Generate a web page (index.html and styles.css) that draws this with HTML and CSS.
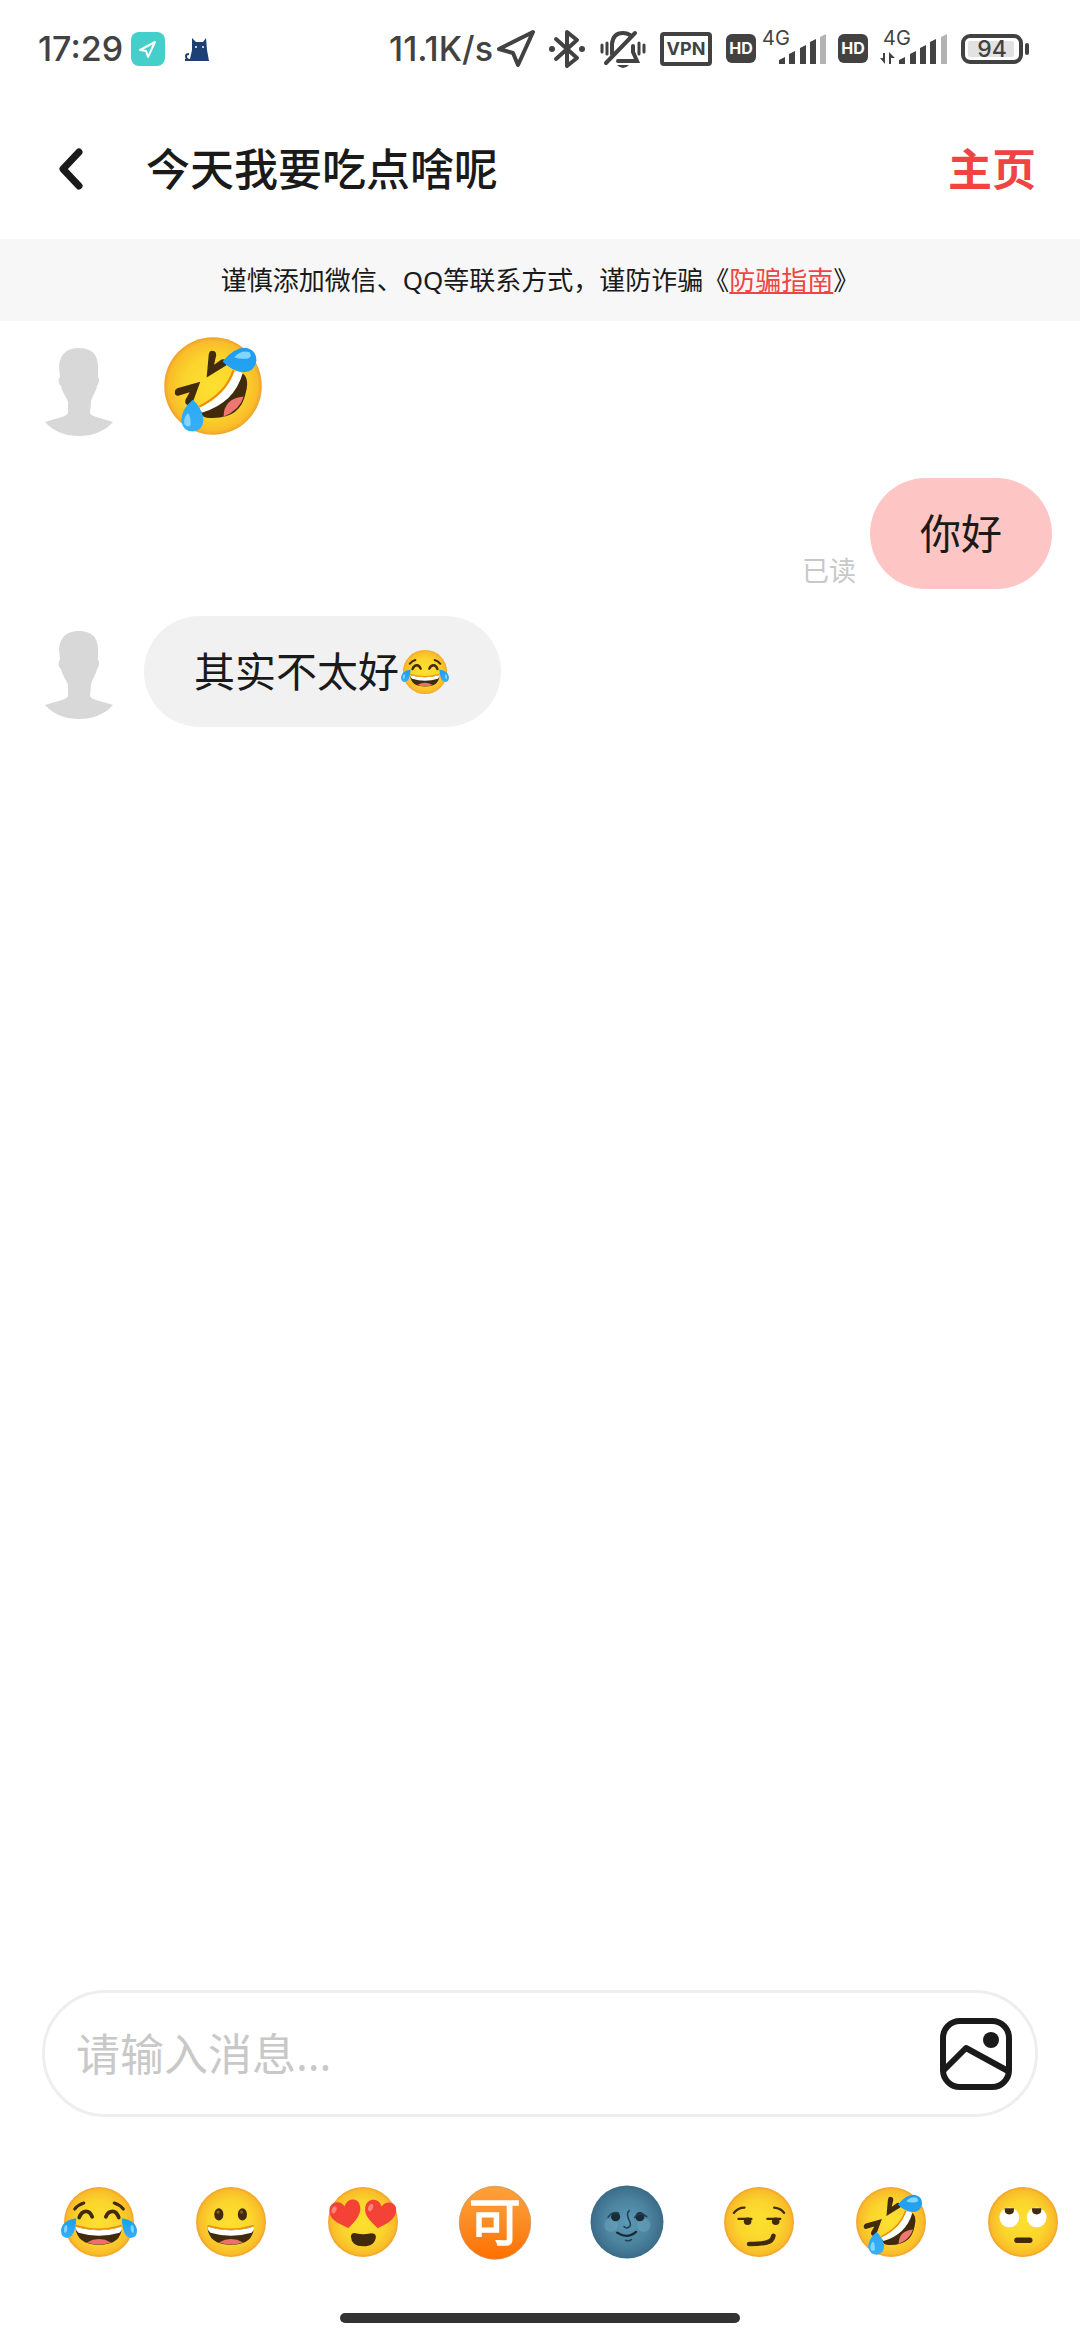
FILE: index.html
```html
<!DOCTYPE html>
<html lang="zh-CN">
<head>
    <meta charset="UTF-8">
    <meta name="viewport" content="width=device-width, initial-scale=1.0">
    <title>今天我要吃点啥呢</title>
    <link rel="stylesheet" href="styles.css">
</head>
<body>
    <!-- Shared emoji and avatar shapes -->
    <svg class="sprites" width="0" height="0" aria-hidden="true">
        <defs>
            <radialGradient id="face" cx="0.5" cy="0.5" r="0.5">
                <stop offset="0" stop-color="#fde030"/>
                <stop offset="0.6" stop-color="#fbd52d"/>
                <stop offset="0.92" stop-color="#f9bc29"/>
                <stop offset="1" stop-color="#f0a02a"/>
            </radialGradient>
            <linearGradient id="orange" x1="0" y1="0" x2="0" y2="1">
                <stop offset="0" stop-color="#ffa13a"/>
                <stop offset="0.5" stop-color="#fb8c25"/>
                <stop offset="1" stop-color="#ff6f00"/>
            </linearGradient>
            <radialGradient id="night" cx="0.5" cy="0.5" r="0.5">
                <stop offset="0" stop-color="#5c9ab8"/>
                <stop offset="0.6" stop-color="#4d849f"/>
                <stop offset="1" stop-color="#3b6c88"/>
            </radialGradient>
            <linearGradient id="tear" x1="0" y1="0" x2="0" y2="1">
                <stop offset="0" stop-color="#1e9df0"/>
                <stop offset="1" stop-color="#35aff8"/>
            </linearGradient>
            <g id="grin">
                <path d="M19 56 Q50 66 80 56 Q80 80 50 80 Q20 80 19 56Z" fill="#422b0d"/>
                <path d="M19 56 Q50 66 80 56 Q81 61 77 64 Q50 72 23 64 Q19 61 19 56Z" fill="#fff"/>
                <path d="M34 77 Q50 68 66 77 Q50 82 34 77Z" fill="#f06f6a"/>
                <path d="M20 55 Q50 64 79 55" fill="none" stroke="#eb8f00" stroke-width="2" stroke-linecap="round"/>
            </g>
            <path id="heart" d="M21 36 C12 30 0 23 0 12 C0 4 5 0 11 0 C16 0 19 3 21 7 C23 3 27 0 32 0 C37 0 41 4 41 11 C41 22 30 30 21 36Z"/>

            <symbol id="joy" viewBox="0 0 100 100">
                <circle cx="50" cy="50" r="46" fill="url(#face)"/>
                <g fill="none" stroke="#422b0d" stroke-linecap="round">
                    <path d="M18 33 Q23 27 30 25 M82 33 Q77 27 70 25" stroke-width="4"/>
                    <path d="M24 44 Q27 36 33 36 Q38 36 41 43 M59 43 Q62 36 68 36 Q73 36 76 44" stroke-width="5"/>
                </g>
                <use href="#grin"/>
                <path d="M20 45 Q1 48 0 61 Q0 71 8 71 Q19 70 20 45Z M80 45 Q99 48 100 61 Q100 71 92 71 Q81 70 80 45Z" fill="url(#tear)"/>
                <path d="M4 60 Q4 55 7 54 Q9 55 8 62 Q4 68 4 60Z M96 60 Q96 55 93 54 Q91 55 92 62 Q96 68 96 60Z" fill="#81d4fa"/>
            </symbol>

            <symbol id="grinning" viewBox="0 0 100 100">
                <circle cx="50" cy="50" r="46" fill="url(#face)"/>
                <ellipse cx="34" cy="40" rx="6" ry="8" fill="#422b0d"/>
                <ellipse cx="65" cy="40" rx="6" ry="8" fill="#422b0d"/>
                <circle cx="33" cy="37" r="2" fill="#896024"/>
                <circle cx="64" cy="37" r="2" fill="#896024"/>
                <use href="#grin"/>
            </symbol>

            <symbol id="heart-eyes" viewBox="0 0 100 100">
                <circle cx="50" cy="50" r="46" fill="url(#face)"/>
                <use href="#heart" transform="translate(4 26) rotate(-10)" fill="#f44336"/>
                <use href="#heart" transform="translate(55 19) rotate(10)" fill="#f44336"/>
                <ellipse cx="12" cy="34" rx="3" ry="5" transform="rotate(20 12 34)" fill="#ff847a"/>
                <ellipse cx="60" cy="31" rx="3" ry="5" transform="rotate(25 60 31)" fill="#ff847a"/>
                <path d="M34 69 Q35 63 42 65 Q50 67 59 65 Q66 64 67 69 Q66 82 50 82 Q35 82 34 69Z" fill="#422b0d"/>
            </symbol>

            <symbol id="acceptable" viewBox="0 0 100 100">
                <ellipse cx="50" cy="51" rx="47" ry="48" fill="url(#orange)" stroke="#c8925a" stroke-width="1"/>
                <text class="acceptable-text" x="50" y="75" text-anchor="middle">可</text>
            </symbol>

            <symbol id="new-moon" viewBox="0 0 100 100">
                <circle cx="50" cy="50" r="48" fill="url(#night)"/>
                <circle cx="29" cy="54" r="9" fill="#6ba5c0" opacity="0.5"/>
                <circle cx="72" cy="54" r="9" fill="#6ba5c0" opacity="0.5"/>
                <circle cx="35" cy="43" r="6" fill="#1b2b38"/>
                <circle cx="67" cy="43" r="6" fill="#1b2b38"/>
                <g fill="none" stroke="#1f4156" stroke-linecap="round" stroke-width="2">
                    <path d="M25 44 Q30 36 39 38 M60 44 Q67 35 76 43"/>
                    <path d="M53 35 Q49 38 52 46 Q57 55 52 57 Q49 59 46 56"/>
                    <path d="M37 64 Q50 73 62 63" stroke="#182b38" stroke-width="3"/>
                    <path d="M48 74 Q53 76 56 73"/>
                </g>
            </symbol>

            <symbol id="smirk" viewBox="0 0 100 100">
                <circle cx="50" cy="50" r="46" fill="url(#face)"/>
                <circle cx="35" cy="49" r="5" fill="#422b0d"/>
                <circle cx="72" cy="49" r="5" fill="#422b0d"/>
                <g fill="none" stroke="#422b0d" stroke-linecap="round" stroke-linejoin="round">
                    <path d="M17 38 Q22 31 31 31 M70 31 Q79 32 83 38" stroke-width="3"/>
                    <path d="M23 46 Q30 46 40 46 M61 46 Q68 46 78 46" stroke-width="3"/>
                    <path d="M37 79 Q52 79 60 77 Q68 75 69 68" stroke-width="6"/>
                </g>
            </symbol>

            <symbol id="rofl" viewBox="0 0 100 100">
                <circle cx="50" cy="50" r="46" fill="url(#face)"/>
                <path d="M76 37 Q85 41 81 56 Q76 83 44 80 Q38 78 38 73 Q66 63 76 37Z" fill="#422b0d"/>
                <path d="M70 37 Q75 35 78 38 Q70 66 40 75 Q37 73 38 70 Q62 58 70 37Z" fill="#fff"/>
                <path d="M60 79 Q60 62 79 60 Q75 73 60 79Z" fill="#ef7772"/>
                <path d="M69 36 Q62 57 38 69" fill="none" stroke="#eb8f00" stroke-width="2" stroke-linecap="round"/>
                <path d="M46 20 Q47 16 50 17 Q53 17 53 21 L51 30 L58 25 Q62 24 63 27 Q64 29 62 31 L44 42Z" fill="#422b0d"/>
                <path d="M18 59 Q14 60 14 56 Q14 53 17 52 L38 46 L31 65 Q29 69 26 68 Q23 67 24 63 L28 56Z" fill="#422b0d"/>
                <path d="M59 27 Q69 14 81 14 Q91 16 91 26 Q89 37 79 37 Q69 37 59 27Z M31 63 Q20 72 20 83 Q22 93 31 93 Q41 92 41 81 Q39 70 31 63Z" fill="url(#tear)"/>
                <path d="M70 23 Q76 16 84 18 Q88 22 83 24 Q76 25 70 23Z M26 76 Q29 76 29 87 Q26 90 23 86 Q22 80 26 76Z" fill="#81d4fa"/>
            </symbol>

            <symbol id="rolling-eyes" viewBox="0 0 100 100">
                <circle cx="50" cy="50" r="46" fill="url(#face)"/>
                <circle cx="32" cy="44" r="13" fill="#fff"/>
                <circle cx="68" cy="44" r="13" fill="#fff"/>
                <path d="M26 32 H38 Q39 40 32 40 Q25 40 26 32Z M62 32 H74 Q75 40 68 40 Q61 40 62 32Z" fill="#422b0d"/>
                <path d="M42 74 H59" stroke="#422b0d" stroke-width="7" stroke-linecap="round"/>
            </symbol>

            <symbol id="avatar" viewBox="0 0 68 88">
                <path d="M34 0 C46 0 53 6 53 18 L53 29 C55 30 54 36 52 38 C51 44 47 48 46 54 L45 65 C46 69 57 70 68 74 C59 84 47 88 34 88 C21 88 9 84 0 74 C11 70 22 69 23 65 L23 54 C21 48 17 44 16 38 C13 36 13 30 15 29 L14 18 C15 6 22 0 34 0Z" fill="#d8d8d8"/>
            </symbol>
        </defs>
    </svg>

    <!-- Status bar -->
    <div class="status-bar">
        <div class="status-left">
            <span class="status-text">17:29</span>
            <svg width="34" height="34" viewBox="0 0 34 34">
                <rect width="34" height="34" rx="8" fill="#45cfcb"/>
                <path d="M24 10 L9 18 L15 19 L17 25Z" fill="none" stroke="#fff" stroke-width="2" stroke-linejoin="round"/>
            </svg>
            <svg class="cat" width="24" height="23" viewBox="0 0 24 23">
                <path d="M7 0 L11 4 H18 L21 0 L22 12 L24 23 H0 V21 H5 L7 12Z" fill="#1d3f73"/>
                <path d="M5 22 Q1 22 1 18 Q1 16 4 16" fill="none" stroke="#1d3f73" stroke-width="2"/>
                <circle cx="11" cy="9" r="1" fill="#fff"/>
                <circle cx="18" cy="9" r="1" fill="#fff"/>
            </svg>
        </div>
        <div class="status-right">
            <div class="network">
                <span class="status-text">11.1K/s</span>
                <svg width="40" height="40" viewBox="0 0 40 40">
                    <path d="M37 3 L3 20 L17 24 L22 36Z" fill="none" stroke="#424242" stroke-width="4" stroke-linejoin="round"/>
                </svg>
            </div>
            <svg width="38" height="40" viewBox="0 0 38 40">
                <path d="M8 10 L29 29 L19 37 V3 L29 11 L8 30" fill="none" stroke="#424242" stroke-width="4" stroke-linejoin="round" stroke-linecap="round"/>
                <circle cx="4" cy="20" r="3" fill="#424242"/>
                <circle cx="34" cy="20" r="3" fill="#424242"/>
            </svg>
            <svg width="50" height="40" viewBox="0 0 50 40">
                <g fill="none" stroke="#424242" stroke-width="4" stroke-linecap="round">
                    <path d="M14 25 V15 Q15 4 25 4 Q29 4 32 6"/>
                    <path d="M8 34 L37 4"/>
                    <path d="M35 17 V23 L39 32 H20"/>
                </g>
                <path d="M4 16 V23 M9 14 V25 M41 14 V25 M46 16 V23" fill="none" stroke="#424242" stroke-width="3" stroke-linecap="round"/>
                <path d="M19 36 H31 Q25 42 19 36Z" fill="#424242"/>
            </svg>
            <svg width="54" height="40" viewBox="0 0 54 40">
                <rect x="2" y="5" width="48" height="30" rx="2" fill="none" stroke="#424242" stroke-width="4"/>
                <text class="badge-text" x="26" y="26" text-anchor="middle" fill="#424242">VPN</text>
            </svg>
            <svg width="100" height="48" viewBox="0 -4 100 48">
                <rect x="0" y="5" width="30" height="29" rx="6" fill="#424242"/>
                <text class="badge-text hd" x="15" y="25" text-anchor="middle" fill="#fff">HD</text>
                <text class="net-text" x="36" y="16" fill="#424242">4G</text>
                <path d="M53 35 V31 L59 28 V35Z M63 35 V25 L69 22 V35Z M74 35 V19 L80 16 V35Z M84 35 V13 L90 10 V35Z" fill="#424242"/>
                <path d="M94 35 V8 L100 5 V35Z" fill="#b3b3b3"/>
            </svg>
            <svg width="110" height="48" viewBox="0 -4 110 48">
                <rect x="0" y="5" width="30" height="29" rx="6" fill="#424242"/>
                <text class="badge-text hd" x="15" y="25" text-anchor="middle" fill="#fff">HD</text>
                <text class="net-text" x="45" y="16" fill="#424242">4G</text>
                <path d="M47 24 V35 L42 29 H45 V24Z M51 35 V23 L57 29 H53 V35Z" fill="#424242"/>
                <path d="M61 35 V31 L67 28 V35Z M72 35 V25 L78 22 V35Z M82 35 V19 L88 16 V35Z M92 35 V13 L98 10 V35Z" fill="#424242"/>
                <path d="M103 35 V8 L109 5 V35Z" fill="#b3b3b3"/>
            </svg>
            <svg width="70" height="40" viewBox="0 0 70 40">
                <rect x="3" y="7" width="58" height="26" rx="7" fill="none" stroke="#424242" stroke-width="4"/>
                <rect x="8" y="12" width="46" height="16" rx="2" fill="#e2e2e2"/>
                <path d="M67 16 V24" stroke="#424242" stroke-width="4" stroke-linecap="round"/>
                <text class="battery-text" x="32" y="28" text-anchor="middle" fill="#424242">94</text>
            </svg>
        </div>
    </div>

    <!-- Chat header -->
    <header class="header">
        <button class="back" type="button" aria-label="返回">
            <svg width="30" height="44" viewBox="0 0 30 44">
                <path d="M23 5 L7 22 L23 39" fill="none" stroke="#1a1a1a" stroke-width="7" stroke-linecap="round" stroke-linejoin="round"/>
            </svg>
        </button>
        <h1 class="title">今天我要吃点啥呢</h1>
        <a class="home-link" href="#">主页</a>
    </header>

    <p class="notice">谨慎添加微信、QQ等联系方式，谨防诈骗《<a href="#">防骗指南</a>》</p>

    <!-- Messages -->
    <main class="chat">
        <div class="message">
            <svg class="avatar"><use href="#avatar"/></svg>
            <div class="sticker">
                <svg class="emoji-big" role="img" aria-label="笑得打滚"><use href="#rofl"/></svg>
            </div>
        </div>
        <div class="message mine">
            <span class="read">已读</span>
            <div class="bubble">你好</div>
        </div>
        <div class="message">
            <svg class="avatar"><use href="#avatar"/></svg>
            <div class="bubble">其实不太好<svg class="emoji-inline" role="img" aria-label="笑哭"><use href="#joy"/></svg></div>
        </div>
    </main>

    <!-- Composer -->
    <form class="composer">
        <input type="text" placeholder="请输入消息..." aria-label="消息">
        <button type="button" aria-label="发送图片">
            <svg width="74" height="74" viewBox="0 0 74 74">
                <rect x="4" y="4" width="66" height="66" rx="17" fill="none" stroke="#1a1a1a" stroke-width="6"/>
                <path d="M5 53 L27 31 L69 54" fill="none" stroke="#1a1a1a" stroke-width="6" stroke-linejoin="round"/>
                <circle cx="52" cy="23" r="8" fill="#1a1a1a"/>
            </svg>
        </button>
    </form>

    <div class="emoji-row">
        <button type="button" aria-label="笑哭"><svg><use href="#joy"/></svg></button>
        <button type="button" aria-label="嘿嘿"><svg><use href="#grinning"/></svg></button>
        <button type="button" aria-label="花痴"><svg><use href="#heart-eyes"/></svg></button>
        <button type="button" aria-label="可"><svg><use href="#acceptable"/></svg></button>
        <button type="button" aria-label="新月脸"><svg><use href="#new-moon"/></svg></button>
        <button type="button" aria-label="得意"><svg><use href="#smirk"/></svg></button>
        <button type="button" aria-label="笑得打滚"><svg><use href="#rofl"/></svg></button>
        <button type="button" aria-label="翻白眼"><svg><use href="#rolling-eyes"/></svg></button>
    </div>

    <div class="home-bar"></div>
</body>
</html>
```
FILE: styles.css
```css
* {
    box-sizing: border-box;
}

body {
    display: flex;
    flex-direction: column;
    min-height: 100vh;
    margin: 0;
    background-color: #fff;
    color: #1a1a1a;
    font-family: "Noto Sans", "Noto Sans CJK SC", sans-serif;
}

button {
    padding: 0;
    border: none;
    background: none;
    cursor: pointer;
}

svg {
    display: block;
    flex-shrink: 0;
}

.sprites {
    position: absolute;
}

/* Status bar */
.status-bar {
    display: flex;
    justify-content: space-between;
    align-items: center;
    height: 98px;
    padding: 0 50px 0 38px;
    color: #424242;
    font-family: Inter, "Noto Sans", sans-serif;
}

.status-left,
.status-right,
.network {
    display: flex;
    align-items: center;
}

.status-left {
    gap: 8px;
}

.status-right {
    gap: 12px;
}

.network {
    gap: 3px;
}

.status-text {
    font-size: 34px;
    line-height: 40px;
    font-weight: 500;
}

.cat {
    margin-left: 12px;
}

.badge-text {
    font-size: 18px;
    font-weight: 700;
}

.hd {
    font-size: 16px;
}

.net-text {
    font-size: 20px;
}

.battery-text {
    font-size: 23px;
    font-weight: 500;
}

/* Header */
.header {
    display: flex;
    align-items: center;
    height: 141px;
    padding: 0 44px 0 56px;
}

.back {
    width: 90px;
}

.title {
    flex: 1;
    margin: 0;
    font-size: 44px;
    line-height: 60px;
    font-weight: 500;
}

.home-link {
    color: #f04444;
    font-size: 44px;
    line-height: 60px;
    font-weight: 700;
    text-decoration: none;
}

.notice {
    margin: 0;
    padding: 21px 20px;
    background-color: #f7f7f7;
    font-size: 26px;
    line-height: 40px;
    text-align: center;
}

.notice a {
    color: #f04444;
}

/* Messages */
.chat {
    flex: 1;
    display: flex;
    flex-direction: column;
    gap: 27px;
    padding: 12px 28px 40px 45px;
}

.message {
    display: flex;
    align-items: flex-start;
}

.mine {
    justify-content: flex-end;
    align-items: flex-end;
    gap: 14px;
}

.avatar {
    width: 68px;
    height: 88px;
    margin: 15px 31px 0 0;
}

.sticker {
    padding: 0 16px 12px;
}

.emoji-big {
    width: 106px;
    height: 106px;
}

.bubble {
    display: flex;
    align-items: center;
    padding: 25px 50px;
    border-radius: 56px;
    background-color: #f1f1f1;
    font-size: 41px;
    line-height: 61px;
}

.mine .bubble {
    background-color: #fec5c5;
}

.emoji-inline {
    width: 52px;
    height: 48px;
}

.read {
    color: #c8c8c8;
    font-size: 27px;
    line-height: 36px;
}

/* Composer */
.composer {
    display: flex;
    align-items: center;
    height: 127px;
    margin: 0 42px;
    padding: 0 22px 0 31px;
    border: 3px solid #eee;
    border-radius: 64px;
}

.composer input {
    flex: 1;
    min-width: 0;
    padding: 0;
    border: none;
    outline: none;
    color: #1a1a1a;
    font-family: inherit;
    font-size: 44px;
    line-height: 60px;
}

.composer input::placeholder {
    color: #c8c8c8;
}

.emoji-row {
    display: flex;
    justify-content: space-between;
    padding: 67px 19px 53px 61px;
}

.emoji-row svg {
    width: 76px;
    height: 76px;
}

.acceptable-text {
    fill: #fff;
    font-size: 68px;
    font-weight: 700;
}

/* Gesture bar */
.home-bar {
    width: 37%;
    height: 10px;
    margin: 0 auto 17px;
    border-radius: 5px;
    background-color: #333;
}
```
